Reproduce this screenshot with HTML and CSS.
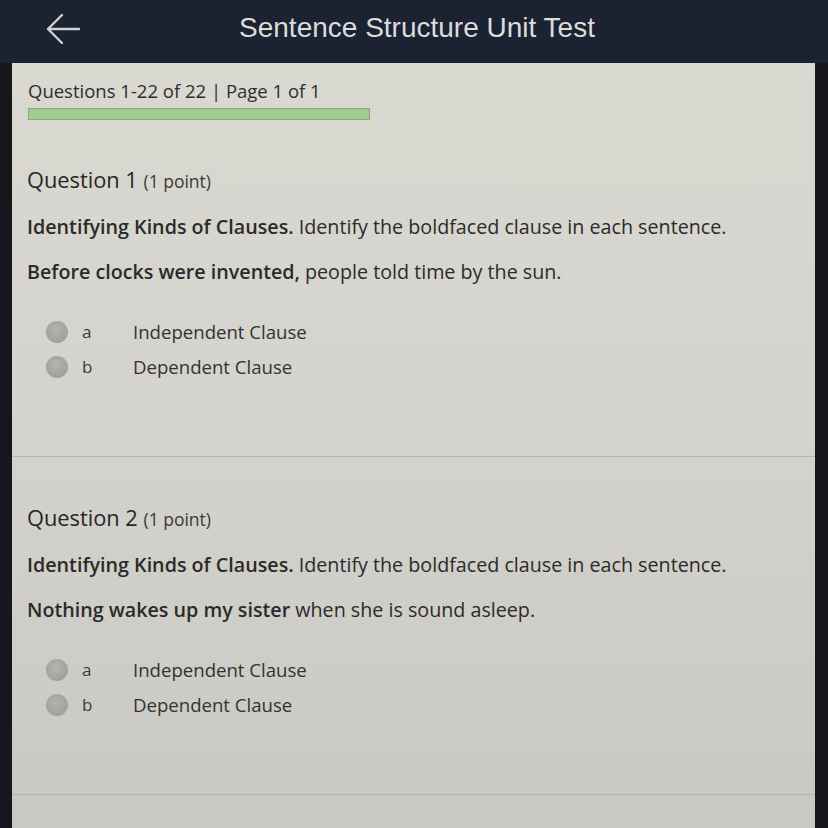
FILE: index.html
```html
<!DOCTYPE html>
<html lang="en">
<head>
<meta charset="utf-8">
<title>Sentence Structure Unit Test</title>
<link rel="stylesheet" href="styles.css">
</head>
<body>
<header class="topbar">
  <button class="back" aria-label="Back">
    <svg width="36" height="32" viewBox="0 0 36 32" aria-hidden="true">
      <path d="M34 16 H3 M17 2 L3 16 L17 30" fill="none" stroke="#cfd0d2" stroke-width="2.4" stroke-linecap="round" stroke-linejoin="round"/>
    </svg>
  </button>
  <h1 class="title">Sentence Structure Unit Test</h1>
</header>
<main class="panel">
  <div class="meta">
    <div class="meta-text">Questions 1-22 of 22 | Page 1 of 1</div>
    <div class="progress"><div class="progress-fill"></div></div>
  </div>

  <section class="question">
    <h2 class="q-title">Question 1 <span class="points">(1 point)</span></h2>
    <p class="q-prompt"><b>Identifying Kinds of Clauses.</b> Identify the boldfaced clause in each sentence.</p>
    <p class="q-sentence"><b>Before clocks were invented,</b> people told time by the sun.</p>
    <ul class="options">
      <li class="option"><span class="radio"></span><span class="letter">a</span><span class="label">Independent Clause</span></li>
      <li class="option"><span class="radio"></span><span class="letter">b</span><span class="label">Dependent Clause</span></li>
    </ul>
  </section>

  <section class="question">
    <h2 class="q-title">Question 2 <span class="points">(1 point)</span></h2>
    <p class="q-prompt"><b>Identifying Kinds of Clauses.</b> Identify the boldfaced clause in each sentence.</p>
    <p class="q-sentence"><b>Nothing wakes up my sister</b> when she is sound asleep.</p>
    <ul class="options">
      <li class="option"><span class="radio"></span><span class="letter">a</span><span class="label">Independent Clause</span></li>
      <li class="option"><span class="radio"></span><span class="letter">b</span><span class="label">Dependent Clause</span></li>
    </ul>
  </section>
</main>
</body>
</html>
```

FILE: styles.css
```css
html, body {
  margin: 0;
  padding: 0;
  height: 100%;
}
body {
  background: #15171c;
  font-family: "Open Sans", "Noto Sans", sans-serif;
  color: #2b2b2b;
  overflow: hidden;
}
.topbar {
  height: 63px;
  background: #1b2232;
  display: flex;
  align-items: center;
  position: relative;
}
.back {
  background: none;
  border: 0;
  padding: 0;
  margin: 0 0 6px 45px;
  width: 36px;
  height: 32px;
  display: flex;
}
.title {
  position: absolute;
  left: 0;
  right: 0;
  top: 0;
  margin: 0;
  text-align: center;
  line-height: 56px;
  padding-left: 6px;
  font-family: "Liberation Sans", Arial, sans-serif;
  font-weight: 400;
  font-size: 28px;
  color: #dcdcdc;
  pointer-events: none;
}
.panel {
  margin: 0 13px 0 12px;
  background: linear-gradient(180deg, #d9d8d1 0%, #d3d2cc 50%, #c8c7c2 100%);
  min-height: 765px;
  padding-top: 17px;
}
.meta {
  padding-left: 16px;
}
.meta-text {
  font-size: 18.5px;
  line-height: 22px;
  color: #2e2e2e;
}
.progress {
  margin-top: 6px;
  width: 340px;
  height: 10px;
  border: 1px solid #86a873;
  background: #a3cb8e;
}
.progress-fill {
  width: 100%;
  height: 100%;
  background: #a4cc90;
}
.question {
  padding: 46px 0 72px 15px;
  border-bottom: 1px solid #b5b4af;
}
.question + .question {
  padding-top: 47px;
}
.q-title {
  margin: 0;
  font-size: 21.8px;
  font-weight: 400;
  line-height: 28px;
  color: #262626;
}
.points {
  font-size: 17.5px;
  color: #3a3a3a;
}
.q-prompt,
.q-sentence {
  margin: 18px 0 0;
  font-size: 19.7px;
  line-height: 28px;
  color: #2b2b2b;
}
.q-sentence {
  margin-top: 17px;
}
.q-prompt b,
.q-sentence b {
  font-weight: 600;
}
.options {
  list-style: none;
  margin: 28px 0 0;
  padding: 0;
}
.option {
  display: flex;
  align-items: center;
  height: 35px;
}
.radio {
  width: 22px;
  height: 22px;
  border-radius: 50%;
  margin-left: 19px;
  background: radial-gradient(circle at 45% 40%, #b4b3b0 0%, #a4a3a0 60%, #999895 100%);
}
.letter {
  width: 65px;
  padding-left: 14px;
  box-sizing: border-box;
  font-size: 17px;
  color: #3a3a3a;
}
.label {
  font-size: 18.6px;
  color: #333;
}
```
